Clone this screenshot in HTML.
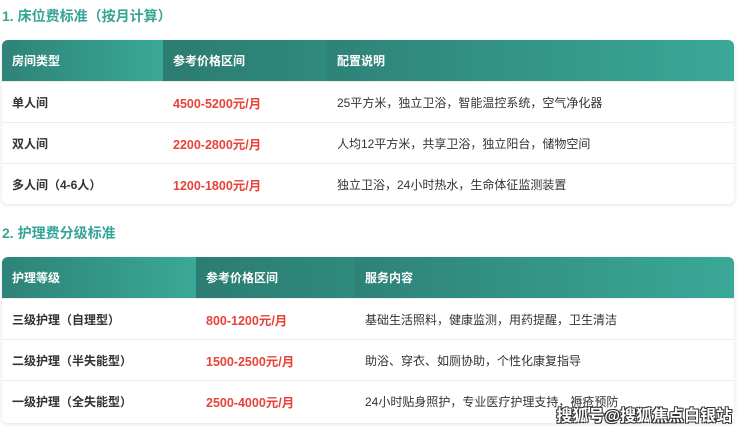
<!DOCTYPE html>
<html><head><meta charset="utf-8"><style>
body{margin:0;background:#fff;font-family:"Liberation Sans","Noto Sans CJK SC",sans-serif;width:740px;height:429px;overflow:hidden;position:relative}
h2{position:absolute;left:2px;margin:0;font-size:14px;font-weight:bold;color:#36a596}
.t{position:absolute;left:2px;width:732px;border-radius:6px;overflow:hidden;box-shadow:0 1px 4px rgba(0,0,0,.12);background:#fff}
.r{display:flex;height:41px;box-sizing:border-box;align-items:center;border-top:1px solid #eee;font-size:12px;color:#333}
.r div{box-sizing:border-box;padding-left:10px}
.h{border:none;height:41px;color:#fff;font-weight:bold;font-size:12px}
.h div{height:100%;display:flex;align-items:center;background:linear-gradient(90deg,#2d8377,#3aa898)}
.h div:nth-child(2){background:linear-gradient(90deg,#2c7c72,#2e8a7c)}
.h div:nth-child(3){background:linear-gradient(90deg,#2e8278,#3aa898)}
.p{color:#e8423a;font-weight:bold;font-size:12.5px}
.b{font-weight:bold}
.wm{position:absolute;right:8px;top:402px;font-size:16px;color:#fff;font-weight:bold;text-shadow:-1px -1px 0 #333,1px -1px 0 #333,-1px 1px 0 #333,1px 1px 0 #333}
</style></head><body>
<h2 style="top:6px">1. 床位费标准（按月计算）</h2>
<div class="t" style="top:40px">
<div class="r h"><div style="width:161px">房间类型</div><div style="width:164px">参考价格区间</div><div style="flex:1">配置说明</div></div>
<div class="r"><div class="b" style="width:161px">单人间</div><div class="p" style="width:164px">4500-5200元/月</div><div style="flex:1">25平方米，独立卫浴，智能温控系统，空气净化器</div></div>
<div class="r"><div class="b" style="width:161px">双人间</div><div class="p" style="width:164px">2200-2800元/月</div><div style="flex:1">人均12平方米，共享卫浴，独立阳台，储物空间</div></div>
<div class="r"><div class="b" style="width:161px">多人间（4-6人）</div><div class="p" style="width:164px">1200-1800元/月</div><div style="flex:1">独立卫浴，24小时热水，生命体征监测装置</div></div>
</div>
<h2 style="top:223px">2. 护理费分级标准</h2>
<div class="t" style="top:257px;height:166px">
<div class="r h"><div style="width:194px">护理等级</div><div style="width:159px">参考价格区间</div><div style="flex:1">服务内容</div></div>
<div class="r"><div class="b" style="width:194px">三级护理（自理型）</div><div class="p" style="width:159px">800-1200元/月</div><div style="flex:1">基础生活照料，健康监测，用药提醒，卫生清洁</div></div>
<div class="r"><div class="b" style="width:194px">二级护理（半失能型）</div><div class="p" style="width:159px">1500-2500元/月</div><div style="flex:1">助浴、穿衣、如厕协助，个性化康复指导</div></div>
<div class="r"><div class="b" style="width:194px">一级护理（全失能型）</div><div class="p" style="width:159px">2500-4000元/月</div><div style="flex:1">24小时贴身照护，专业医疗护理支持，褥疮预防</div></div>
</div>
<div class="wm">搜狐号@搜狐焦点白银站</div>
</body></html>
